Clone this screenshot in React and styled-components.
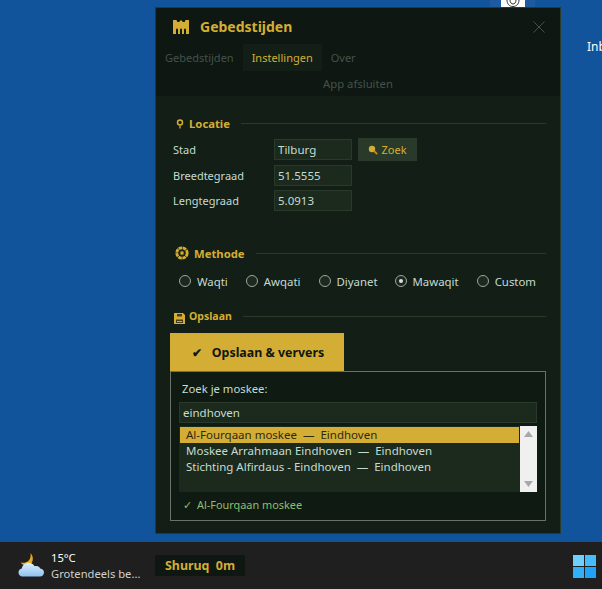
import React from 'react'
import styled, { createGlobalStyle } from 'styled-components'

const gold = '#d4ae34'

const GlobalStyle = createGlobalStyle`
  html, body, #root {
    margin: 0;
    padding: 0;
    height: 100%;
    overflow: hidden;
  }
  body {
    font-family: "Noto Sans", "Open Sans", sans-serif;
    font-size: 12px;
  }
  input:focus {
    outline: none;
  }
`

const Root = styled.div`
  width: 602px;
  height: 589px;
  display: flex;
  flex-direction: column;
  background: #12549c;
`

const Desktop = styled.div`
  position: relative;
  height: 542px;
  border-bottom: 1px solid #3c4a55;
  box-sizing: border-box;
  padding: 7px 0 0 155px;
`

const DesktopIcon = styled.div`
  position: absolute;
  left: 490px;
  top: 0;
  width: 45px;
  height: 7px;
  background: #1d5aa0;
  display: flex;
  justify-content: center;
  overflow: hidden;
`

const DesktopIconFace = styled.div`
  width: 24px;
  height: 7px;
  background: #fff;
  display: flex;
  justify-content: center;
`

const DesktopLabel = styled.div`
  position: absolute;
  left: 587px;
  top: 39px;
  color: #fff;
  font-size: 12px;
  line-height: 16px;
`

const Window = styled.div`
  width: 406px;
  height: 527px;
  box-sizing: border-box;
  border: 1px solid #2a3a2a;
  background: #131e17;
  display: flex;
  flex-direction: column;
`

const Header = styled.div`
  height: 88px;
  background: #0e1712;
  display: flex;
  flex-direction: column;
  flex-shrink: 0;
`

const TitleRow = styled.div`
  height: 36px;
  display: flex;
  align-items: center;
  padding: 1px 15px 0 16px;
  gap: 10px;
  box-sizing: border-box;
`

const Title = styled.div`
  flex: 1;
  color: ${gold};
  font-size: 14px;
  font-weight: 700;
`

const Tabs = styled.div`
  height: 27px;
  display: flex;
`

const Tab = styled.div`
  padding: 0 9px;
  display: flex;
  align-items: center;
  color: ${(p) => (p.$active ? gold : '#44524a')};
  background: ${(p) => (p.$active ? '#131e17' : 'transparent')};
  font-size: 11px;
`

const QuitRow = styled.div`
  flex: 1;
  display: flex;
  align-items: center;
  justify-content: center;
  color: #44524a;
  font-size: 11.3px;
`

const Body = styled.div`
  flex: 1;
  display: flex;
  flex-direction: column;
  padding: 0 14px 12px 14px;
`

const SectionHead = styled.div`
  display: flex;
  align-items: center;
  gap: 5px;
  height: 16px;
  margin-top: ${(p) => p.$top}px;
  padding-left: 5px;
  color: ${gold};
  font-size: ${(p) => p.$size || 11.3}px;
  font-weight: 700;
`

const SectionRule = styled.div`
  flex: 1;
  height: 1px;
  background: #2a3a2a;
  margin-left: 6px;
`

const IconDrop = styled.span`
  display: flex;
  margin: 5px -1px 0 -1px;
`

const FieldList = styled.div`
  display: flex;
  flex-direction: column;
  gap: 4px;
  margin-top: 7px;
  padding-left: 3px;
`

const FieldRow = styled.div`
  display: grid;
  grid-template-columns: 95px 78px auto;
  column-gap: 6px;
  align-items: center;
  justify-content: start;
`

const FieldLabel = styled.label`
  color: #c4dcd0;
  font-size: 11px;
`

const TextInput = styled.input`
  box-sizing: border-box;
  width: 100%;
  height: 21px;
  padding: 0 3px;
  border: 1px solid #2a3a2a;
  background: #1c2a1e;
  color: #c4dcd0;
  font-family: inherit;
  font-size: 11.5px;
`

const SearchButton = styled.button`
  height: 23px;
  width: 59px;
  border: 0;
  padding: 0;
  background: #2a3a2a;
  color: ${gold};
  font-family: inherit;
  font-size: 11px;
  display: flex;
  align-items: center;
  justify-content: center;
  gap: 3px;
`

const RadioRow = styled.div`
  display: flex;
  margin-top: 11px;
  padding-left: 9px;
  height: 18px;
  align-items: center;
`

const RadioItem = styled.label`
  display: flex;
  align-items: center;
  gap: 6px;
  margin-right: ${(p) => p.$gap}px;
  color: #c4dcd0;
  font-size: 11.4px;
`

const RadioDot = styled.span`
  box-sizing: border-box;
  width: 12px;
  height: 12px;
  border-radius: 50%;
  border: 1px solid #9aa69e;
  background: #1c2a1e;
  display: flex;
  align-items: center;
  justify-content: center;

  &::after {
    content: '';
    display: ${(p) => (p.$on ? 'block' : 'none')};
    width: 4px;
    height: 4px;
    border-radius: 50%;
    background: #d8e4dc;
  }
`

const SaveButton = styled.button`
  align-self: flex-start;
  width: 174px;
  height: 38px;
  margin-top: 9px;
  border: 0;
  padding: 0 0 0 2px;
  background: ${gold};
  color: #0e1712;
  font-family: inherit;
  font-size: 12.4px;
  font-weight: 700;
  display: flex;
  align-items: center;
  justify-content: center;
  gap: 10px;
`

const MosquePanel = styled.div`
  box-sizing: border-box;
  height: 150px;
  border: 1px solid #6a716c;
  background: #0f1a13;
  padding: 9px 8px 0 8px;
  display: flex;
  flex-direction: column;
`

const PanelLabel = styled.div`
  color: #c4dcd0;
  font-size: 11.3px;
  line-height: 16px;
  padding-left: 3px;
`

const MosqueInput = styled(TextInput)`
  margin-top: 5px;
  flex-shrink: 0;
`

const ListBox = styled.div`
  margin-top: 3px;
  height: 66px;
  background: #1c2a1e;
  display: flex;
  flex-shrink: 0;
`

const ListItems = styled.div`
  flex: 1;
  padding: 1px 1px 0 1px;
`

const ListItem = styled.div`
  height: 16px;
  line-height: 16px;
  padding-left: 6px;
  font-size: 11.5px;
  color: ${(p) => (p.$selected ? '#2c2a14' : '#c4dcd0')};
  background: ${(p) => (p.$selected ? gold : 'transparent')};
  white-space: pre;
`

const ScrollBar = styled.div`
  width: 17px;
  background: #f0f0f0;
  display: flex;
  flex-direction: column;
  justify-content: space-between;
  align-items: center;
  padding: 5px 0;
  box-sizing: border-box;
`

const Status = styled.div`
  margin-top: 5px;
  padding-left: 4px;
  color: #8fbf6a;
  font-size: 10.9px;
  line-height: 16px;
  display: flex;
  gap: 5px;
`

const Taskbar = styled.div`
  flex: 1;
  background: #1f1f1f;
  display: flex;
  align-items: center;
  padding: 0 6px 0 17px;
`

const Weather = styled.div`
  display: flex;
  align-items: center;
  gap: 7px;
  width: 138px;
`

const WeatherText = styled.div`
  display: flex;
  flex-direction: column;
  color: #fff;
  font-size: 11.2px;
  line-height: 16px;
  white-space: nowrap;
`

const WeatherSub = styled.span`
  color: #d0d0d0;
`

const PrayerBadge = styled.div`
  width: 90px;
  height: 21px;
  background: #0e1712;
  color: ${gold};
  font-size: 12.4px;
  font-weight: 700;
  display: flex;
  align-items: center;
  justify-content: center;
  white-space: pre;
`

const StartLogo = styled.svg`
  margin: 2px 0 0 auto;
`

const MosqueIcon = () => (
  <svg width="18" height="16" viewBox="0 0 18 16">
    <path
      fill={gold}
      d="M1 1h3.500l.8 2h1.700L9 1l2 2h1.700l.8-2H17v14h-3v-4c0-1-.5-1.500-1-1.500s-1 .5-1 1.500v4h-2v-4c0-1-.5-1.500-1-1.500s-1 .5-1 1.500v4H6v-4c0-1-.5-1.500-1-1.500s-1 .5-1 1.500v4H1z"
    />
  </svg>
)

const PinIcon = () => (
  <svg width="9" height="12" viewBox="0 0 9 12">
    <circle cx="5" cy="5.500" r="2.500" fill="#131e17" stroke={gold} strokeWidth="1.500" />
    <path d="M5 8.500v3" stroke="#c8862a" strokeWidth="1.600" />
  </svg>
)

const FlowerIcon = () => (
  <svg width="14" height="14" viewBox="0 0 14 14">
    <circle cx="7" cy="7" r="5.200" fill="none" stroke={gold} strokeWidth="2.800" strokeDasharray="3.500 .6" />
    <circle cx="7" cy="7" r="1.900" fill={gold} stroke="#6b5a1e" strokeWidth=".7" />
  </svg>
)

const SaveIcon = () => (
  <svg width="11" height="11" viewBox="0 0 11 11">
    <path fill={gold} d="M0 0h9l2 2v9H0z" />
    <path fill="#4a3c14" d="M3 1h5v2.500H3zM2 6.500h7V10H2z" />
    <path fill={gold} d="M3 8h5v1H3z" />
  </svg>
)

const SearchIcon = () => (
  <svg width="10" height="10" viewBox="0 0 10 10">
    <circle cx="4" cy="4" r="3.200" fill={gold} />
    <path d="M6 6l3.200 3.200" stroke="#c8862a" strokeWidth="1.800" />
  </svg>
)

const CloseIcon = () => (
  <svg width="12" height="12" viewBox="0 0 12 12">
    <path d="M.5.500l11 11M11.500.500l-11 11" stroke="#3f5446" strokeWidth="1" fill="none" />
  </svg>
)

const Arrow = ({ down }) => (
  <svg width="9" height="6" viewBox="0 0 9 6">
    <path d={down ? 'M0 0h9L4.500 6z' : 'M0 6h9L4.500 0z'} fill="#a8a8a8" />
  </svg>
)

const WeatherIcon = () => (
  <svg width="27" height="25" viewBox="0 0 27 25">
    <defs>
      <linearGradient id="cloudFill" x1="0" y1="0" x2="0" y2="1">
        <stop offset="0" stopColor="#dceefc" />
        <stop offset="1" stopColor="#8fc3f0" />
      </linearGradient>
    </defs>
    <path d="M13.500 0C17.500 4 16.500 12 10 12.500 7.500 12.700 5.200 11.800 3.500 9.500c3 .8 5.800.2 7.800-1.500 2-1.800 2.800-5 2.200-8z" fill="#e8a91e" />
    <path
      d="M5.500 23.500C3 23.500 1.500 21.700 1.500 19.500c0-2 1.500-3.600 3.300-3.900C5.400 12 8 9.800 11.500 9.800c2.800 0 5 1.400 6 3.500.6-.2 1.200-.3 1.800-.3 1.900 0 3.300 1 3.900 2.500 2.300.2 3.800 1.800 3.800 3.900 0 2.300-1.800 4.100-4 4.100z"
      fill="url(#cloudFill)"
    />
  </svg>
)

const RoseGlyph = () => (
  <svg width="14" height="7" viewBox="0 0 14 7">
    <path d="M1 0c0 4 2.500 6.500 6 6.500S13 4 13 0M4 0c0 2.500 1.500 4 3 4s3-1.500 3-4" fill="none" stroke="#333" strokeWidth="1" />
  </svg>
)

const methods = [
  { name: 'Waqti', gap: 18 },
  { name: 'Awqati', gap: 18 },
  { name: 'Diyanet', gap: 17 },
  { name: 'Mawaqit', gap: 18, on: true },
  { name: 'Custom', gap: 0 },
]

const mosques = [
  'Al-Fourqaan moskee  —  Eindhoven',
  'Moskee Arrahmaan Eindhoven  —  Eindhoven',
  'Stichting Alfirdaus - Eindhoven  —  Eindhoven',
]

const App = () => {
  return (
    <Root>
      <GlobalStyle />
      <Desktop>
        <DesktopIcon>
          <DesktopIconFace>
            <RoseGlyph />
          </DesktopIconFace>
        </DesktopIcon>
        <DesktopLabel>Inb</DesktopLabel>
        <Window>
          <Header>
            <TitleRow>
              <MosqueIcon />
              <Title>Gebedstijden</Title>
              <CloseIcon />
            </TitleRow>
            <Tabs>
              <Tab>Gebedstijden</Tab>
              <Tab $active>Instellingen</Tab>
              <Tab>Over</Tab>
            </Tabs>
            <QuitRow>App afsluiten</QuitRow>
          </Header>
          <Body>
            <SectionHead $top={19}>
              <PinIcon />
              Locatie
              <SectionRule />
            </SectionHead>
            <FieldList>
              <FieldRow>
                <FieldLabel>Stad</FieldLabel>
                <TextInput defaultValue="Tilburg" />
                <SearchButton>
                  <SearchIcon />
                  Zoek
                </SearchButton>
              </FieldRow>
              <FieldRow>
                <FieldLabel>Breedtegraad</FieldLabel>
                <TextInput defaultValue="51.5555" />
              </FieldRow>
              <FieldRow>
                <FieldLabel>Lengtegraad</FieldLabel>
                <TextInput defaultValue="5.0913" />
              </FieldRow>
            </FieldList>
            <SectionHead $top={34}>
              <FlowerIcon />
              Methode
              <SectionRule />
            </SectionHead>
            <RadioRow>
              {methods.map((m) => (
                <RadioItem key={m.name} $gap={m.gap}>
                  <RadioDot $on={m.on} />
                  {m.name}
                </RadioItem>
              ))}
            </RadioRow>
            <SectionHead $top={18} $size={10.5}>
              <IconDrop>
                <SaveIcon />
              </IconDrop>
              Opslaan
              <SectionRule />
            </SectionHead>
            <SaveButton>
              <span>✔</span>
              Opslaan &amp; ververs
            </SaveButton>
            <MosquePanel>
              <PanelLabel>Zoek je moskee:</PanelLabel>
              <MosqueInput defaultValue="eindhoven" />
              <ListBox>
                <ListItems>
                  {mosques.map((m, i) => (
                    <ListItem key={m} $selected={i === 0}>
                      {m}
                    </ListItem>
                  ))}
                </ListItems>
                <ScrollBar>
                  <Arrow />
                  <Arrow down />
                </ScrollBar>
              </ListBox>
              <Status>
                <span>✓</span>
                Al-Fourqaan moskee
              </Status>
            </MosquePanel>
          </Body>
        </Window>
      </Desktop>
      <Taskbar>
        <Weather>
          <WeatherIcon />
          <WeatherText>
            <span>15°C</span>
            <WeatherSub>Grotendeels be...</WeatherSub>
          </WeatherText>
        </Weather>
        <PrayerBadge>Shuruq  0m</PrayerBadge>
        <StartLogo width="23" height="23" viewBox="0 0 23 23">
          <path fill="#6ed0fd" d="M0 0h11v11H0z" />
          <path fill="#45bcfc" d="M12 0h11v11H12z" />
          <path fill="#2fb0fb" d="M0 12h11v11H0z" />
          <path fill="#1fa2f9" d="M12 12h11v11H12z" />
        </StartLogo>
      </Taskbar>
    </Root>
  )
}

export default App
